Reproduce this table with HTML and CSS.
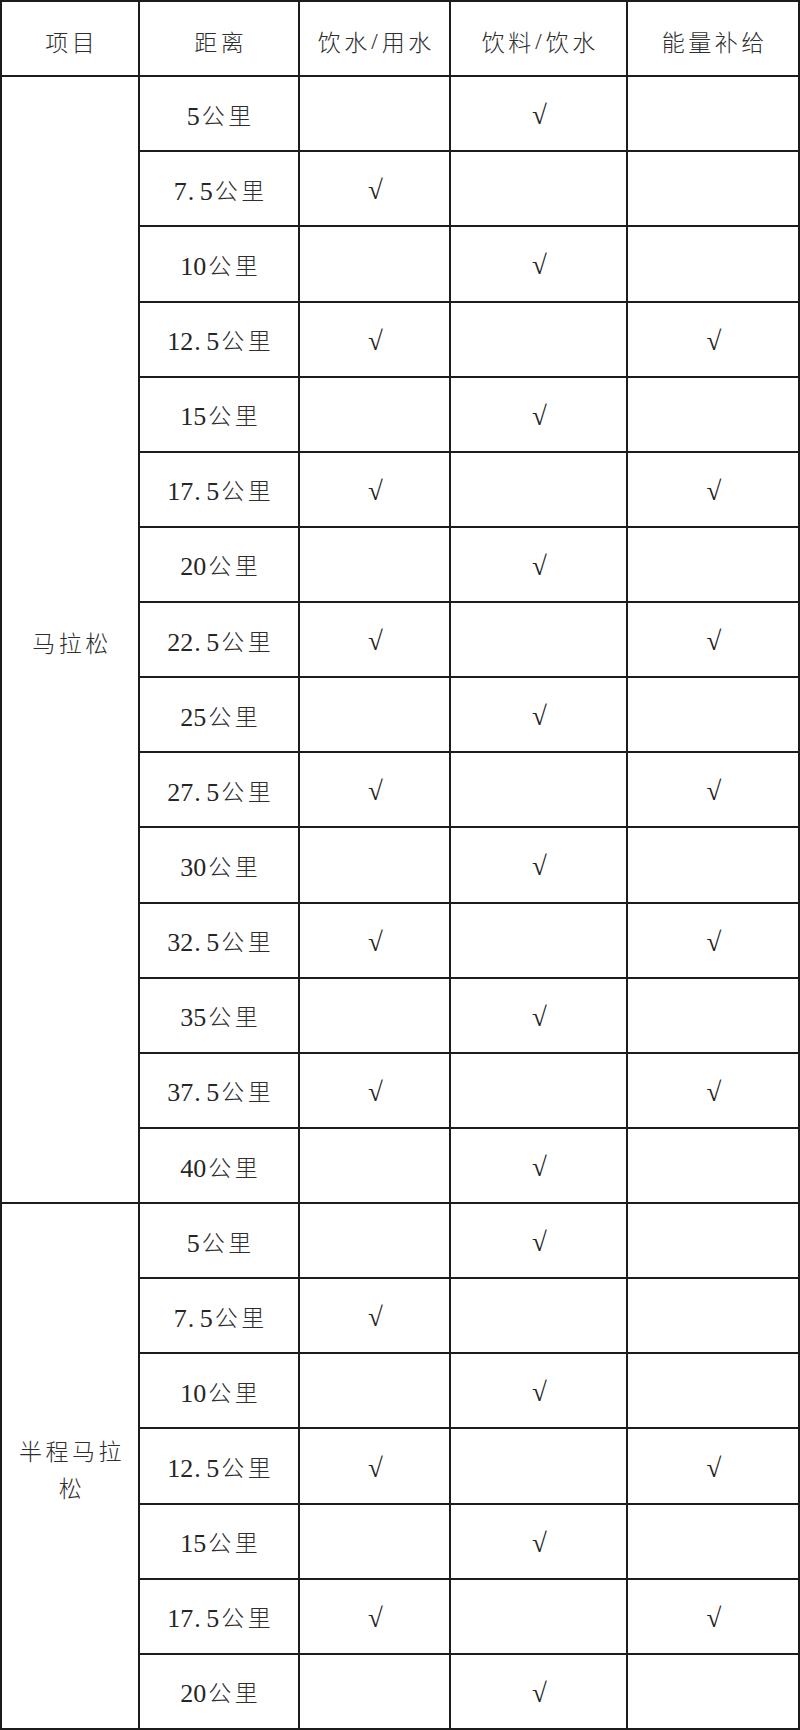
FILE: index.html
```html
<!DOCTYPE html>
<html lang="zh-CN">
<head>
<meta charset="utf-8">
<title>补给站</title>
<link rel="stylesheet" href="styles.css">
</head>
<body>
<div class="sheet">
  <div class="cell head">项目</div>
  <div class="cell head">距离</div>
  <div class="cell head">饮水<span class="sl">/</span>用水</div>
  <div class="cell head">饮料<span class="sl">/</span>饮水</div>
  <div class="cell head">能量补给</div>

  <div class="cell item span15">马拉松</div>
  <div class="cell dist"><span class="num">5</span>公里</div><div class="cell"></div><div class="cell chk">√</div><div class="cell"></div>
  <div class="cell dist"><span class="num">7<span class="dot">.</span>5</span>公里</div><div class="cell chk">√</div><div class="cell"></div><div class="cell"></div>
  <div class="cell dist"><span class="num">10</span>公里</div><div class="cell"></div><div class="cell chk">√</div><div class="cell"></div>
  <div class="cell dist"><span class="num">12<span class="dot">.</span>5</span>公里</div><div class="cell chk">√</div><div class="cell"></div><div class="cell chk">√</div>
  <div class="cell dist"><span class="num">15</span>公里</div><div class="cell"></div><div class="cell chk">√</div><div class="cell"></div>
  <div class="cell dist"><span class="num">17<span class="dot">.</span>5</span>公里</div><div class="cell chk">√</div><div class="cell"></div><div class="cell chk">√</div>
  <div class="cell dist"><span class="num">20</span>公里</div><div class="cell"></div><div class="cell chk">√</div><div class="cell"></div>
  <div class="cell dist"><span class="num">22<span class="dot">.</span>5</span>公里</div><div class="cell chk">√</div><div class="cell"></div><div class="cell chk">√</div>
  <div class="cell dist"><span class="num">25</span>公里</div><div class="cell"></div><div class="cell chk">√</div><div class="cell"></div>
  <div class="cell dist"><span class="num">27<span class="dot">.</span>5</span>公里</div><div class="cell chk">√</div><div class="cell"></div><div class="cell chk">√</div>
  <div class="cell dist"><span class="num">30</span>公里</div><div class="cell"></div><div class="cell chk">√</div><div class="cell"></div>
  <div class="cell dist"><span class="num">32<span class="dot">.</span>5</span>公里</div><div class="cell chk">√</div><div class="cell"></div><div class="cell chk">√</div>
  <div class="cell dist"><span class="num">35</span>公里</div><div class="cell"></div><div class="cell chk">√</div><div class="cell"></div>
  <div class="cell dist"><span class="num">37<span class="dot">.</span>5</span>公里</div><div class="cell chk">√</div><div class="cell"></div><div class="cell chk">√</div>
  <div class="cell dist"><span class="num">40</span>公里</div><div class="cell"></div><div class="cell chk">√</div><div class="cell"></div>

  <div class="cell item span7">半程马拉松</div>
  <div class="cell dist"><span class="num">5</span>公里</div><div class="cell"></div><div class="cell chk">√</div><div class="cell"></div>
  <div class="cell dist"><span class="num">7<span class="dot">.</span>5</span>公里</div><div class="cell chk">√</div><div class="cell"></div><div class="cell"></div>
  <div class="cell dist"><span class="num">10</span>公里</div><div class="cell"></div><div class="cell chk">√</div><div class="cell"></div>
  <div class="cell dist"><span class="num">12<span class="dot">.</span>5</span>公里</div><div class="cell chk">√</div><div class="cell"></div><div class="cell chk">√</div>
  <div class="cell dist"><span class="num">15</span>公里</div><div class="cell"></div><div class="cell chk">√</div><div class="cell"></div>
  <div class="cell dist"><span class="num">17<span class="dot">.</span>5</span>公里</div><div class="cell chk">√</div><div class="cell"></div><div class="cell chk">√</div>
  <div class="cell dist"><span class="num">20</span>公里</div><div class="cell"></div><div class="cell chk">√</div><div class="cell"></div>
</div>
</body>
</html>
```

FILE: styles.css
```css
html, body {
  margin: 0;
  padding: 0;
  background: #ffffff;
}

.sheet {
  box-sizing: border-box;
  width: 800px;
  height: 1730px;
  display: grid;
  grid-template-columns: 138px 160px 151px 177px 172px;
  grid-template-rows: repeat(23, 1fr);
  border-top: 2px solid #1c1c1c;
  border-left: 2px solid #1c1c1c;
  font-family: "Liberation Serif", "Noto Sans CJK SC", serif;
  font-size: 23px;
  font-weight: 300;
  color: #2e2e2e;
  letter-spacing: 3.5px;
}

.cell {
  box-sizing: border-box;
  border-right: 2px solid #1c1c1c;
  border-bottom: 2px solid #1c1c1c;
  display: flex;
  align-items: center;
  justify-content: center;
  text-align: center;
  padding: 5px 0 0 3.5px;
  line-height: 37px;
}

.head {
  font-family: "Noto Sans CJK SC", sans-serif;
}

.item {
  font-family: "Noto Sans CJK SC", sans-serif;
  padding: 5px 10px 0 14px;
}

.span15 {
  grid-row: span 15;
}

.span7 {
  grid-row: span 7;
}

.num {
  font-family: "Liberation Serif", serif;
  font-size: 26px;
  font-weight: 400;
  letter-spacing: 0;
  margin-right: 2px;
  color: #262626;
}

.sl {
  font-family: "Liberation Serif", serif;
  display: inline-block;
  width: 11px;
}

.dot {
  display: inline-block;
  width: 13px;
  text-align: left;
  padding-left: 1px;
  box-sizing: border-box;
}

.chk {
  font-family: "Liberation Serif", serif;
  font-size: 27px;
  font-weight: 400;
  color: #222222;
  letter-spacing: 0;
  padding: 4px 0 0 2px;
}
```
